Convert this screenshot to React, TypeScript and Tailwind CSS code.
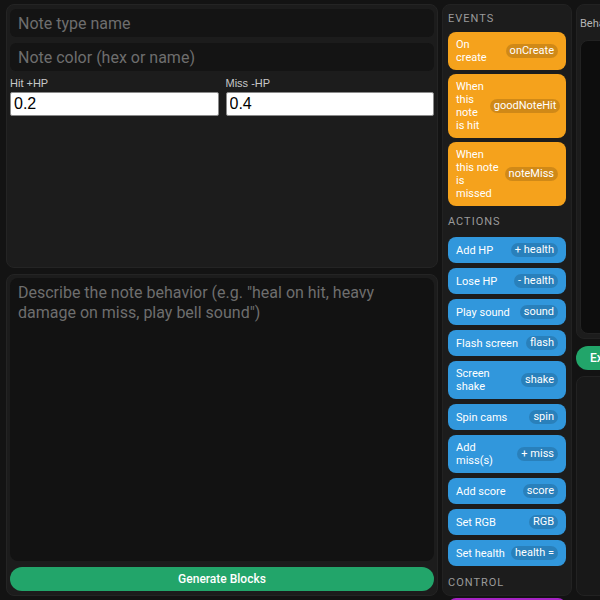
import React from "react";

type Block = { label: string; tag: string };

const events: Block[] = [
  { label: "On create", tag: "onCreate" },
  { label: "When this note is hit", tag: "goodNoteHit" },
  { label: "When this note is missed", tag: "noteMiss" },
];

const actions: Block[] = [
  { label: "Add HP", tag: "+ health" },
  { label: "Lose HP", tag: "- health" },
  { label: "Play sound", tag: "sound" },
  { label: "Flash screen", tag: "flash" },
  { label: "Screen shake", tag: "shake" },
  { label: "Spin cams", tag: "spin" },
  { label: "Add miss(s)", tag: "+ miss" },
  { label: "Add score", tag: "score" },
  { label: "Set RGB", tag: "RGB" },
  { label: "Set health", tag: "health =" },
];

function PaletteBlock({ block, color }: { block: Block; color: string }) {
  return (
    <div
      className={`flex items-center justify-between gap-[6px] rounded-[8px] px-[8px] py-[6px] text-[11px] leading-[13px] text-white ${color}`}
    >
      <span>{block.label}</span>
      <span className="shrink-0 rounded-full bg-black/15 px-[4px] text-[11px] leading-[14px]">
        {block.tag}
      </span>
    </div>
  );
}

function SectionTitle({ children }: { children: React.ReactNode }) {
  return (
    <div className="text-[11px] leading-[16px] tracking-[1px] text-[#9a9a9a]">{children}</div>
  );
}

export default function App() {
  return (
    <div
      className="flex h-[600px] w-[600px] gap-[4px] overflow-hidden bg-[#131313] p-[4px] pr-0"
      style={{ fontFamily: "Roboto, 'Noto Sans', sans-serif" }}
    >
      {/* Editor column */}
      <div className="flex w-[434px] shrink-0 flex-col gap-[6px] pl-[2px]">
        <div className="flex h-[264px] flex-col rounded-[8px] border border-[#242424] bg-[#1c1c1c] p-[3px] pt-[4px]">
          <input
            placeholder="Note type name"
            className="h-[28px] rounded-[6px] bg-[#141414] px-[8px] text-[16px] text-white outline-none placeholder:text-[#6e6e6e]"
          />
          <input
            placeholder="Note color (hex or name)"
            className="mt-[6px] h-[28px] rounded-[6px] bg-[#141414] px-[8px] text-[16px] text-white outline-none placeholder:text-[#6e6e6e]"
          />
          <div
            className="mt-[5px] grid grid-cols-2 gap-[7px]"
            style={{ fontFamily: "'Liberation Sans', Arial, sans-serif" }}
          >
            <label className="flex flex-col text-[11px] leading-[14px] text-[#c8c8c8]">
              Hit +HP
              <input
                defaultValue="0.2"
                className="mt-[2px] h-[24px] rounded-[2px] border border-[#8a8a8a] bg-white px-[3px] text-[16px] text-black outline-none"
              />
            </label>
            <label className="flex flex-col text-[11px] leading-[14px] text-[#c8c8c8]">
              Miss -HP
              <input
                defaultValue="0.4"
                className="mt-[2px] h-[24px] rounded-[2px] border border-[#8a8a8a] bg-white px-[3px] text-[16px] text-black outline-none"
              />
            </label>
          </div>
        </div>

        <div className="flex flex-1 flex-col rounded-[8px] border border-[#242424] bg-[#1c1c1c] p-[3px] pb-[4px]">
          <textarea
            placeholder={'Describe the note behavior (e.g. "heal on hit, heavy damage on miss, play bell sound")'}
            className="flex-1 resize-none rounded-[8px] bg-[#121212] px-[8px] py-[5px] text-[16px] leading-[20px] text-white outline-none placeholder:text-[#6e6e6e]"
          />
          <button className="mt-[6px] h-[24px] rounded-full bg-[#22a56a] text-[12px] font-medium text-white">
            Generate Blocks
          </button>
        </div>
      </div>

      {/* Block palette */}
      <div className="flex w-[130px] shrink-0 flex-col rounded-[8px] border border-[#222] bg-[#1c1c1c] px-[5px] pt-[6px]">
        <SectionTitle>EVENTS</SectionTitle>
        <div className="mt-[5px] flex flex-col gap-[4px]">
          {events.map((b) => (
            <PaletteBlock key={b.tag} block={b} color="bg-[#f5a21c]" />
          ))}
        </div>
        <div className="mt-[8px]">
          <SectionTitle>ACTIONS</SectionTitle>
        </div>
        <div className="mt-[7px] flex flex-col gap-[5px]">
          {actions.map((b) => (
            <PaletteBlock key={b.tag} block={b} color="bg-[#3197dc]" />
          ))}
        </div>
        <div className="mt-[9px]">
          <SectionTitle>CONTROL</SectionTitle>
        </div>
        <div className="mt-[7px] h-[26px] shrink-0 rounded-[8px] bg-[#a624c4]" />
      </div>

      {/* Behavior preview */}
      <div className="flex w-[300px] shrink-0 flex-col gap-[6px]">
        <div className="flex h-[335px] flex-col rounded-[8px] border border-[#222] bg-[#1c1c1c] px-[3px] pt-[12px] pb-[4px]">
          <div className="text-[11px] leading-[14px] text-[#b5b5b5]">Behavior</div>
          <div className="mt-[9px] flex-1 rounded-[8px] border border-[#222] bg-[#0d0d0d]" />
        </div>
        <div>
          <button className="h-[24px] rounded-full bg-[#22a56a] px-[14px] text-[12px] font-medium text-white">
            Export
          </button>
        </div>
        <div className="flex-1 rounded-[8px] border border-[#222] bg-[#181818]" />
      </div>
    </div>
  );
}
